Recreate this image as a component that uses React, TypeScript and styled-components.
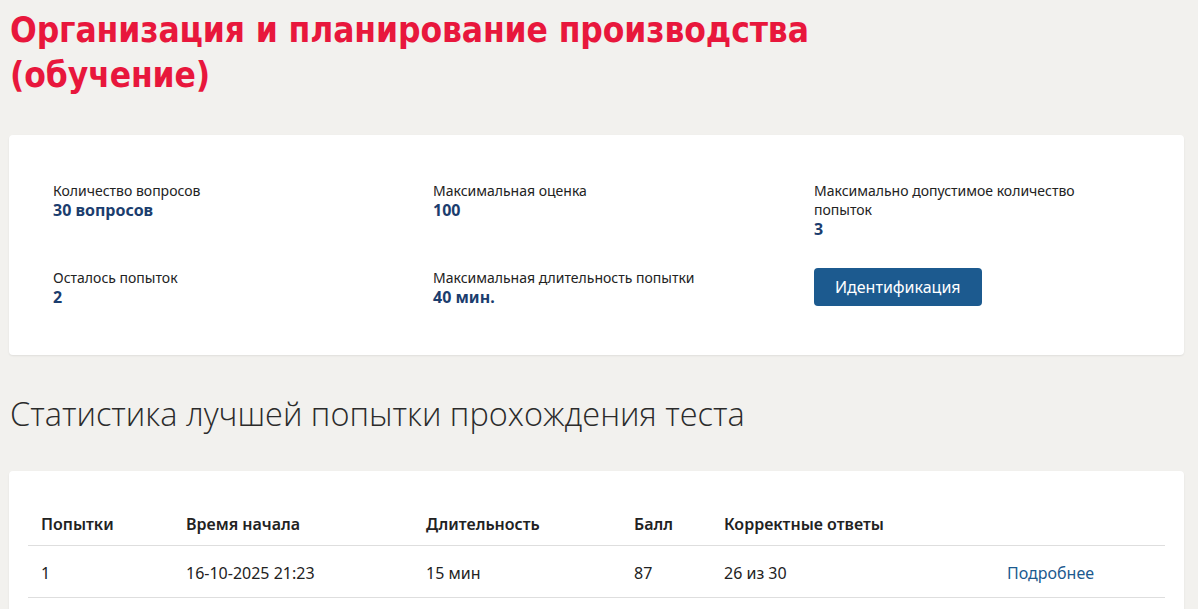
import React from "react";
import styled, { createGlobalStyle } from "styled-components";

const Global = createGlobalStyle`
  html, body { margin: 0; padding: 0; background: #f2f1ee; }
  body { font-family: "Noto Sans", "Open Sans", sans-serif; color: #222; }
  * { box-sizing: border-box; }
`;

const Page = styled.div`
  padding: 8px 14px 0 9px;
`;

const Title = styled.h1`
  margin: 0 0 37px 1px;
  font-family: "DejaVu Sans Condensed", "DejaVu Sans", sans-serif;
  font-weight: 700;
  font-size: 35px;
  line-height: 45px;
  letter-spacing: -0.1px;
  color: #e8173c;
  max-width: 850px;
`;

const Card = styled.section<{ $pad: string }>`
  background: #fff;
  border-radius: 4px;
  box-shadow: 0 1px 2px rgba(0, 0, 0, 0.08);
  padding: ${(p) => p.$pad};
`;

const InfoGrid = styled.div`
  display: grid;
  grid-template-columns: 380px 381px 300px;
  row-gap: 28px;
`;

const Item = styled.div`
  display: flex;
  flex-direction: column;
  align-items: flex-start;
  padding-right: 20px;
`;

const Label = styled.div`
  font-size: 14px;
  line-height: 19px;
  color: #222;
`;

const Value = styled.div`
  font-size: 16px;
  line-height: 21px;
  font-weight: 700;
  color: #1b3d6e;
`;

const Button = styled.button`
  height: 38px;
  padding: 0 21px;
  border: none;
  border-radius: 4px;
  background: #1c5a8f;
  color: #fff;
  font-family: inherit;
  font-size: 16px;
  cursor: pointer;
`;

const Heading = styled.h2`
  margin: 40px 0 38px 1px;
  font-family: "Open Sans", "Noto Sans", sans-serif;
  font-weight: 300;
  font-size: 32.5px;
  line-height: 38px;
  color: #2b2b2b;
`;

const Table = styled.table`
  width: 100%;
  border-collapse: collapse;
  font-size: 16px;
  line-height: 24px;
`;

const Th = styled.th<{ $w?: number }>`
  text-align: left;
  font-weight: 600;
  color: #222;
  padding: 11px 13px 9px;
  border-bottom: 1px solid #dedede;
  width: ${(p) => (p.$w ? `${p.$w}px` : "auto")};
`;

const Td = styled.td`
  padding: 15px 13px 12px;
  border-bottom: 1px solid #dedede;
  color: #222;
`;

const More = styled.a`
  color: #1c5a8f;
  text-decoration: none;
`;

export default function App() {
  return (
    <>
      <Global />
      <Page>
        <Title>Организация и планирование производства (обучение)</Title>
        <Card $pad="46px 44px 47px 44px">
          <InfoGrid>
            <Item>
              <Label>Количество вопросов</Label>
              <Value>30 вопросов</Value>
            </Item>
            <Item>
              <Label>Максимальная оценка</Label>
              <Value>100</Value>
            </Item>
            <Item>
              <Label>Максимально допустимое количество попыток</Label>
              <Value>3</Value>
            </Item>
            <Item>
              <Label>Осталось попыток</Label>
              <Value>2</Value>
            </Item>
            <Item>
              <Label>Максимальная длительность попытки</Label>
              <Value>40 мин.</Value>
            </Item>
            <Item>
              <Button>Идентификация</Button>
            </Item>
          </InfoGrid>
        </Card>
        <Heading>Статистика лучшей попытки прохождения теста</Heading>
        <Card $pad="30px 19px 20px">
          <Table>
            <thead>
              <tr>
                <Th $w={145}>Попытки</Th>
                <Th $w={240}>Время начала</Th>
                <Th $w={208}>Длительность</Th>
                <Th $w={90}>Балл</Th>
                <Th $w={283}>Корректные ответы</Th>
                <Th />
              </tr>
            </thead>
            <tbody>
              <tr>
                <Td>1</Td>
                <Td>16-10-2025 21:23</Td>
                <Td>15 мин</Td>
                <Td>87</Td>
                <Td>26 из 30</Td>
                <Td>
                  <More href="#">Подробнее</More>
                </Td>
              </tr>
            </tbody>
          </Table>
        </Card>
      </Page>
    </>
  );
}
